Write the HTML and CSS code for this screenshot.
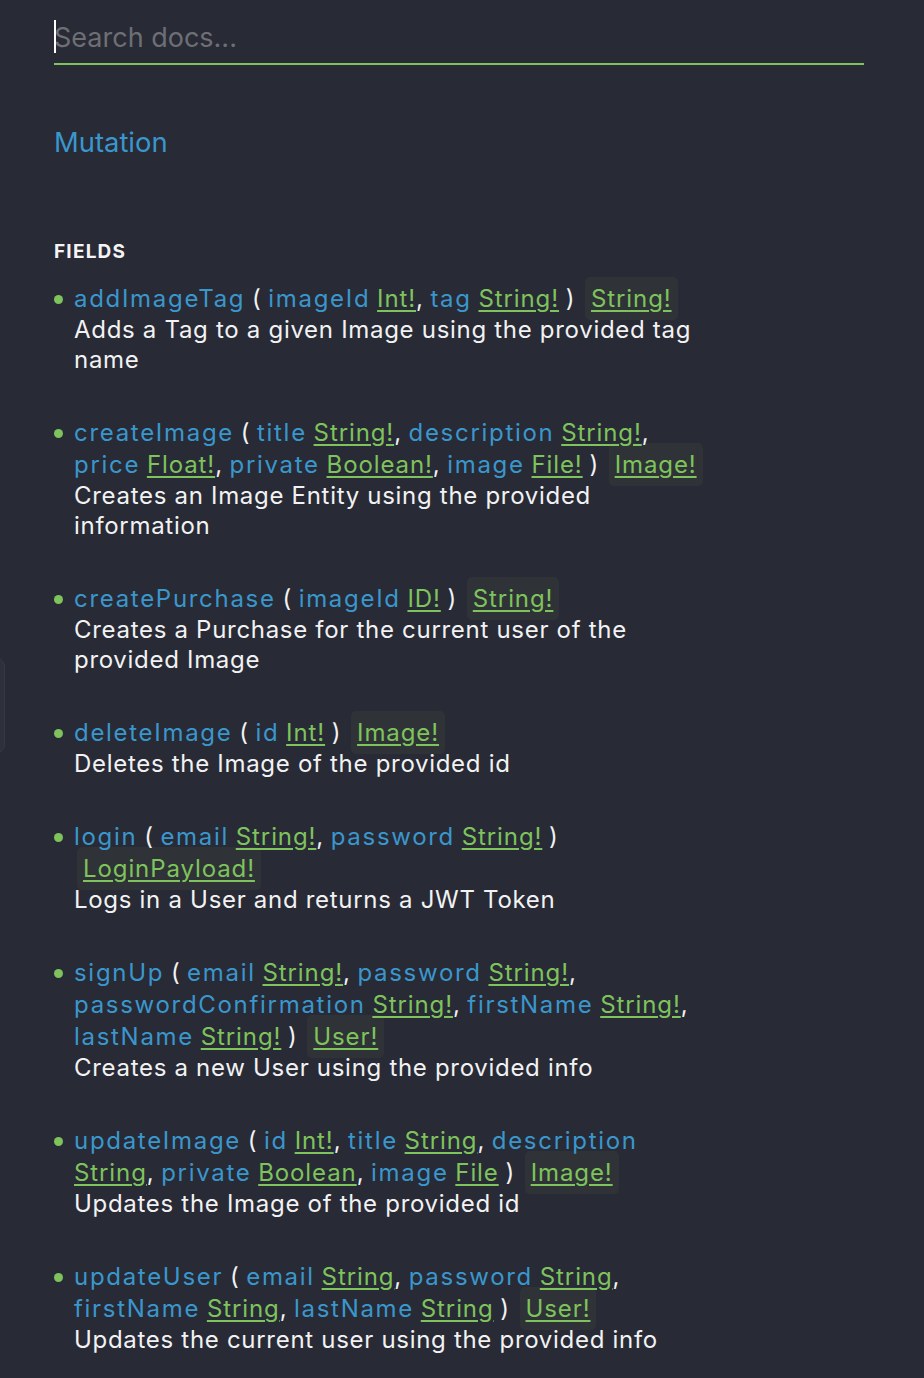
FILE: index.html
```html
<!DOCTYPE html>
<html lang="en">
<head>
<meta charset="utf-8">
<title>Docs</title>
<link rel="stylesheet" href="styles.css">
</head>
<body>
<div class="edge-tab"></div>
<main class="docs">
  <div class="search">
    <input class="search-input" type="text" placeholder="Search docs...">
    <span class="caret"></span>
  </div>

  <h1 class="type-title">Mutation</h1>

  <h2 class="section-title">FIELDS</h2>

  <ul class="fields">
    <li class="field">
      <span class="bullet"></span>
      <div class="field-body">
        <div class="sig"><span class="fname">addImageTag</span> <span class="p">(</span> <span class="arg">imageId</span> <a class="type">Int!</a><span class="p">,</span> <span class="arg">tag</span> <a class="type">String!</a> <span class="p">)</span> <span class="ret"><a class="type">String!</a></span></div>
        <div class="desc">Adds a Tag to a given Image using the provided tag name</div>
      </div>
    </li>
    <li class="field">
      <span class="bullet"></span>
      <div class="field-body">
        <div class="sig"><span class="fname">createImage</span> <span class="p">(</span> <span class="arg">title</span> <a class="type">String!</a><span class="p">,</span> <span class="arg">description</span> <a class="type">String!</a><span class="p">,</span> <span class="arg">price</span> <a class="type">Float!</a><span class="p">,</span> <span class="arg">private</span> <a class="type">Boolean!</a><span class="p">,</span> <span class="arg">image</span> <a class="type">File!</a> <span class="p">)</span> <span class="ret"><a class="type">Image!</a></span></div>
        <div class="desc">Creates an Image Entity using the provided information</div>
      </div>
    </li>
    <li class="field">
      <span class="bullet"></span>
      <div class="field-body">
        <div class="sig"><span class="fname">createPurchase</span> <span class="p">(</span> <span class="arg">imageId</span> <a class="type">ID!</a> <span class="p">)</span> <span class="ret"><a class="type">String!</a></span></div>
        <div class="desc">Creates a Purchase for the current user of the provided Image</div>
      </div>
    </li>
    <li class="field">
      <span class="bullet"></span>
      <div class="field-body">
        <div class="sig"><span class="fname">deleteImage</span> <span class="p">(</span> <span class="arg">id</span> <a class="type">Int!</a> <span class="p">)</span> <span class="ret"><a class="type">Image!</a></span></div>
        <div class="desc">Deletes the Image of the provided id</div>
      </div>
    </li>
    <li class="field">
      <span class="bullet"></span>
      <div class="field-body">
        <div class="sig"><span class="fname">login</span> <span class="p">(</span> <span class="arg">email</span> <a class="type">String!</a><span class="p">,</span> <span class="arg">password</span> <a class="type">String!</a> <span class="p">)</span> <span class="ret"><a class="type">LoginPayload!</a></span></div>
        <div class="desc">Logs in a User and returns a JWT Token</div>
      </div>
    </li>
    <li class="field">
      <span class="bullet"></span>
      <div class="field-body">
        <div class="sig"><span class="fname">signUp</span> <span class="p">(</span> <span class="arg">email</span> <a class="type">String!</a><span class="p">,</span> <span class="arg">password</span> <a class="type">String!</a><span class="p">,</span> <span class="arg">passwordConfirmation</span> <a class="type">String!</a><span class="p">,</span> <span class="arg">firstName</span> <a class="type">String!</a><span class="p">,</span> <span class="arg">lastName</span> <a class="type">String!</a> <span class="p">)</span> <span class="ret"><a class="type">User!</a></span></div>
        <div class="desc">Creates a new User using the provided info</div>
      </div>
    </li>
    <li class="field">
      <span class="bullet"></span>
      <div class="field-body">
        <div class="sig"><span class="fname">updateImage</span> <span class="p">(</span> <span class="arg">id</span> <a class="type">Int!</a><span class="p">,</span> <span class="arg">title</span> <a class="type">String</a><span class="p">,</span> <span class="arg">description</span> <a class="type">String</a><span class="p">,</span> <span class="arg">private</span> <a class="type">Boolean</a><span class="p">,</span> <span class="arg">image</span> <a class="type">File</a> <span class="p">)</span> <span class="ret"><a class="type">Image!</a></span></div>
        <div class="desc">Updates the Image of the provided id</div>
      </div>
    </li>
    <li class="field">
      <span class="bullet"></span>
      <div class="field-body">
        <div class="sig"><span class="fname">updateUser</span> <span class="p">(</span> <span class="arg">email</span> <a class="type">String</a><span class="p">,</span> <span class="arg">password</span> <a class="type">String</a><span class="p">,</span> <span class="arg">firstName</span> <a class="type">String</a><span class="p">,</span> <span class="arg">lastName</span> <a class="type">String</a> <span class="p">)</span> <span class="ret"><a class="type">User!</a></span></div>
        <div class="desc">Updates the current user using the provided info</div>
      </div>
    </li>
  </ul>
</main>
</body>
</html>
```

FILE: styles.css
```css
* { box-sizing: border-box; }

html, body {
  margin: 0;
  padding: 0;
  background: #282a36;
}

body {
  font-family: Inter, "Noto Sans", sans-serif;
  color: #f2f2f2;
  overflow: hidden;
}

.edge-tab {
  position: fixed;
  left: -12px;
  top: 658px;
  width: 17px;
  height: 95px;
  border-radius: 8px;
  background: #2e303c;
  border: 1px solid #363844;
}

.docs {
  padding: 14px 60px 0 54px;
}

.search {
  position: relative;
}

.search-input {
  display: block;
  width: 100%;
  height: 51px;
  margin: 0;
  padding: 0 0 2px 0;
  border: 0;
  border-bottom: 2px solid #7ec35b;
  background: transparent;
  font-family: Inter, "Noto Sans", sans-serif;
  font-size: 27px;
  color: #f2f2f2;
  outline: none;
}

.search-input::placeholder {
  color: #6d6f75;
}

.caret {
  position: absolute;
  left: 0;
  top: 6px;
  width: 2px;
  height: 33px;
  background: #ffffff;
}

.type-title {
  margin: 60px 0 0;
  font-size: 27.4px;
  line-height: 34px;
  font-weight: 400;
  color: #3a97cc;
}

.section-title {
  margin: 80px 0 0;
  font-size: 19px;
  line-height: 26px;
  font-weight: 700;
  letter-spacing: 1.2px;
  color: #f4f4f4;
}

.fields {
  list-style: none;
  margin: 18px 0 0;
  padding: 0;
}

.field {
  display: flex;
  margin-bottom: 42px;
}

.bullet {
  flex: 0 0 auto;
  width: 9px;
  height: 9px;
  margin: 12px 11px 0 0;
  border-radius: 50%;
  background: #7ec35b;
}

.field-body {
  max-width: 634px;
  font-size: 24px;
}

.sig {
  line-height: 32px;
}

.desc {
  line-height: 30px;
  letter-spacing: 0.7px;
  color: #f2f2f2;
}

.fname,
.arg {
  position: relative;
  color: #3a97cc;
  letter-spacing: 1.7px;
}

.p {
  position: relative;
  color: #f2f2f2;
  letter-spacing: 0.7px;
}

.type {
  position: relative;
  color: #7ec35b;
  letter-spacing: 0.9px;
  text-decoration: underline;
  text-decoration-thickness: 2px;
  text-underline-offset: 3px;
  text-decoration-skip-ink: auto;
}

.ret {
  margin-left: 3px;
  padding: 7px 6px;
  border-radius: 5px;
  background: #2f3337;
}
```
